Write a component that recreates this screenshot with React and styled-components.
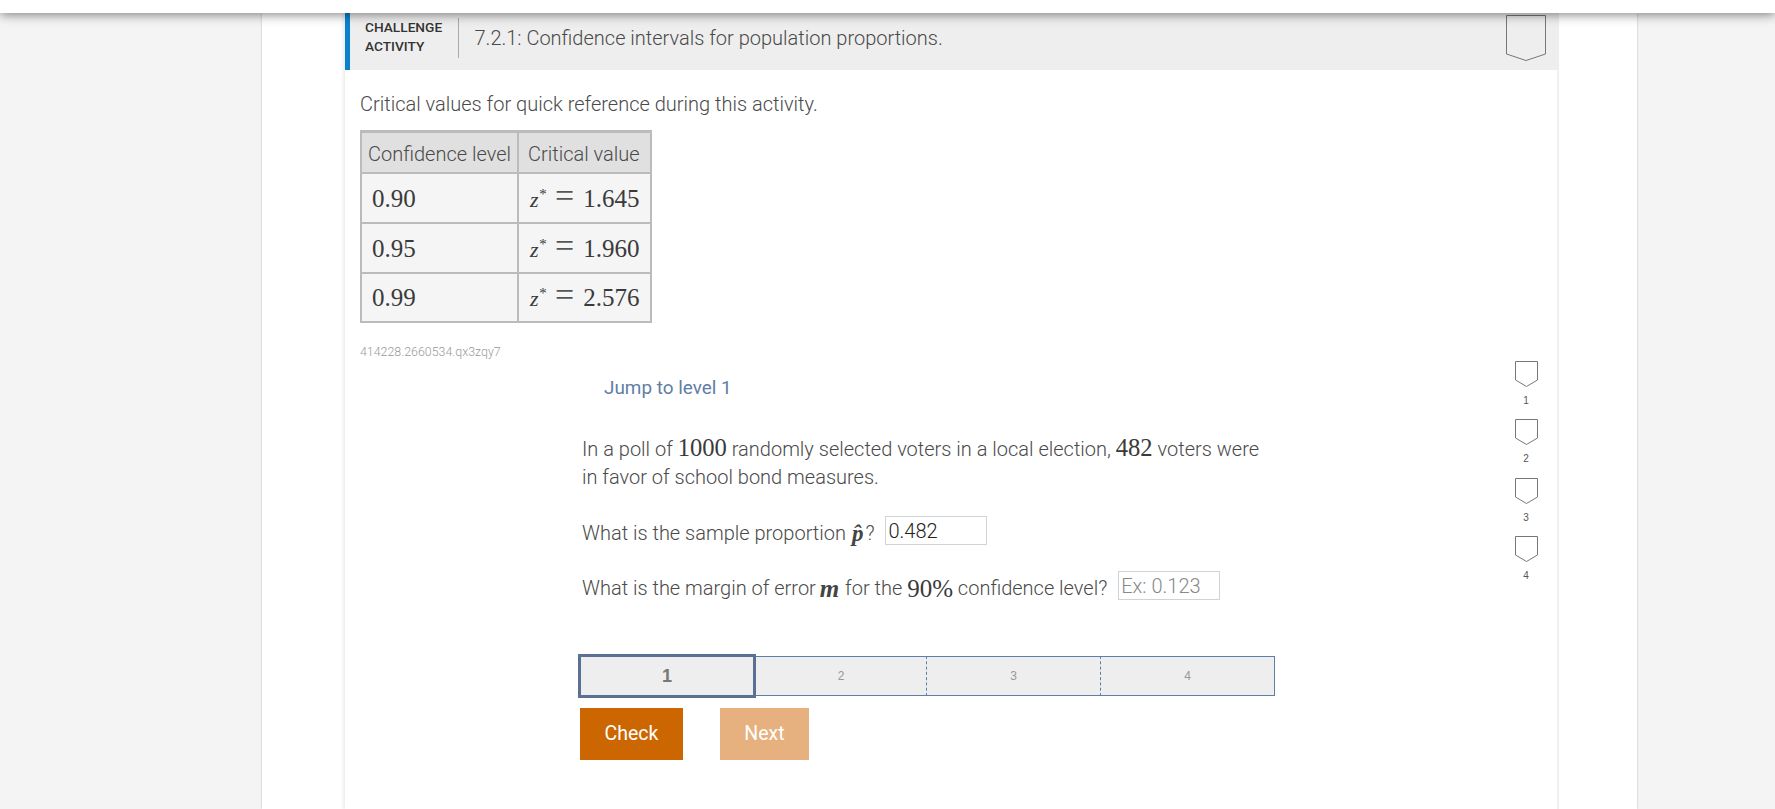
import React from 'react';
import styled, { createGlobalStyle } from 'styled-components';

const GlobalStyle = createGlobalStyle`
  html, body {
    margin: 0;
    padding: 0;
    height: 100%;
    overflow: hidden;
    background: #f4f4f4;
  }
  body {
    font-family: Roboto, "Liberation Sans", sans-serif;
    color: #444;
  }
  * { box-sizing: border-box; }
`;

const Page = styled.div`
  display: flex;
  flex-direction: column;
  height: 809px;
  overflow: hidden;
`;

const TopBar = styled.div`
  flex: none;
  height: 13px;
  background: #fff;
  box-shadow: 0 1px 12px rgba(0, 0, 0, 0.55);
  position: relative;
  z-index: 5;
`;

const Main = styled.div`
  flex: 1;
  display: flex;
  justify-content: flex-start;
  padding-left: 262px;
  min-height: 0;
`;

const Sheet = styled.div`
  width: 1375px;
  background: #fff;
  padding: 0 78px 0 83px;
  box-shadow: 0 0 2px rgba(0, 0, 0, 0.25);
`;

const Card = styled.section`
  display: flex;
  flex-direction: column;
  width: 1214px;
  height: 100%;
  background: #fff;
  box-shadow: -2px 0 3px rgba(0, 0, 0, 0.08);
`;

const Header = styled.header`
  flex: none;
  height: 57px;
  display: flex;
  align-items: flex-start;
  background: #eee;
  border-left: 5px solid #0a83cf;
  padding: 2px 13px 0 15px;
`;

const ActivityTag = styled.div`
  width: 94px;
  height: 40px;
  margin-top: 3px;
  border-right: 1px solid #aaa;
  font-size: 13.7px;
  font-weight: 500;
  line-height: 19px;
  color: #333;
  text-transform: uppercase;
`;

const Title = styled.h1`
  flex: 1;
  margin: 0;
  padding: 9px 0 0 15.5px;
  font-size: 20px;
  font-weight: 300;
  line-height: 28px;
  color: #4a4a4a;
`;

const Body = styled.div`
  flex: 1;
  padding: 20px 0 0 15px;
  border-right: 2px solid #f0f0f0;
`;

const Intro = styled.p`
  margin: 0 0 12px;
  font-size: 20px;
  font-weight: 300;
  line-height: 28px;
  color: #4a4a4a;
`;

const ValuesTable = styled.table`
  border-collapse: separate;
  border-spacing: 0;
  width: 292px;
  background: #f5f5f5;
  border: 2px solid #bbb;
  border-top-width: 3px;
`;

const HeadCell = styled.th`
  height: 41px;
  padding: 2px 0 0 ${(p) => p.$pad}px;
  width: ${(p) => p.$w}px;
  background: #e0e0e0;
  border-bottom: 2px solid #bbb;
  border-right: ${(p) => (p.$last ? 'none' : '2px solid #bbb')};
  font-size: 20px;
  font-weight: 300;
  text-align: left;
  white-space: nowrap;
  color: #4a4a4a;
`;

const ValueCell = styled.td`
  height: ${(p) => (p.$bottom ? 47 : 50)}px;
  padding: 0 0 0 ${(p) => p.$pad}px;
  border-bottom: ${(p) => (p.$bottom ? 'none' : '2px solid #bbb')};
  border-right: ${(p) => (p.$last ? 'none' : '2px solid #bbb')};
  white-space: nowrap;
  color: #333;
`;

const Math = styled.span`
  font-family: "Liberation Serif", "Times New Roman", serif;
  font-size: ${(p) => p.$size || 25}px;
  font-style: ${(p) => (p.$italic ? 'italic' : 'normal')};
  font-weight: ${(p) => p.$weight || 400};
  line-height: 1;
  color: #3a3a3a;
`;

const Variable = styled(Math)`
  margin: 0 ${(p) => p.$right}px 0 ${(p) => p.$left}px;
  color: #444;
`;

const Sup = styled.sup`
  font-size: 15px;
  line-height: 0;
`;

const Equals = styled.span`
  margin: 0 9px 0 9px;
  font-size: 34px;
  font-weight: 300;
  line-height: 0;
  color: #555;
`;

const ActivityId = styled.div`
  margin: 20px 0 0;
  font-size: 12.4px;
  font-weight: 300;
  line-height: 18px;
  color: #999;
`;

const ActivityRow = styled.div`
  display: flex;
  justify-content: space-between;
  padding-right: 11px;
`;

const Question = styled.div`
  padding: 15px 0 0 222px;
`;

const JumpLink = styled.a`
  display: block;
  margin-left: 22px;
  font-size: 18.9px;
  line-height: 24px;
  color: #5f7ea6;
`;

const Prompt = styled.p`
  width: 690px;
  margin: 35px 0 25px;
  font-size: 20px;
  font-weight: 300;
  line-height: 28px;
  color: #4a4a4a;
`;

const AnswerRow = styled.div`
  display: flex;
  align-items: center;
  height: 34px;
  margin-bottom: 21px;
  font-size: 20px;
  font-weight: 300;
  color: #4a4a4a;
  white-space: pre;
`;

const AnswerInput = styled.input`
  width: 102px;
  height: 29px;
  margin: 0 0 5px 11px;
  padding: 0 2px;
  border: 1px solid #ccd4da;
  border-radius: 0;
  outline: none;
  background: #fff;
  font-family: Roboto, sans-serif;
  font-size: 20px;
  font-weight: 300;
  color: #222;

  &::placeholder {
    color: #888;
    opacity: 1;
  }
`;

const Tracker = styled.div`
  display: flex;
  align-items: center;
  margin: 49px 0 10px -4px;
`;

const CurrentStep = styled.div`
  width: 178px;
  height: 44px;
  display: flex;
  align-items: center;
  justify-content: center;
  background: #eee;
  border: 3px solid #5a7094;
  font-family: "Liberation Sans", sans-serif;
  font-size: 18px;
  font-weight: 700;
  color: #777;
`;

const Step = styled.div`
  width: ${(p) => p.$w}px;
  height: 40px;
  display: flex;
  align-items: center;
  justify-content: center;
  background: #eee;
  border-top: 1px solid #5b7fa6;
  border-bottom: 1px solid #5b7fa6;
  border-left: ${(p) => (p.$first ? 'none' : '1px dashed #5b7fa6')};
  border-right: ${(p) => (p.$end ? '1px solid #5b7fa6' : 'none')};
  font-family: "Liberation Sans", sans-serif;
  font-size: 12px;
  color: #999;
`;

const Actions = styled.div`
  display: flex;
  gap: 37px;
  margin-left: -2px;
`;

const ActionButton = styled.button`
  width: ${(p) => p.$w}px;
  height: 52px;
  padding: 0 0 2px;
  border: none;
  background: ${(p) => (p.disabled ? '#e6b17e' : '#cc6600')};
  color: #fff;
  font-family: Roboto, sans-serif;
  font-size: 19.5px;
  font-weight: 400;
`;

const LevelRail = styled.div`
  width: 40px;
  display: flex;
  flex-direction: column;
  align-items: center;
`;

const LevelItem = styled.div`
  height: 58.33px;
  display: flex;
  flex-direction: column;
  align-items: center;
`;

const LevelLabel = styled.span`
  margin-top: 7px;
  font-family: "Liberation Sans", sans-serif;
  font-size: 10px;
  line-height: 14px;
  color: #555;
`;

const Badge = ({ width, height }) => (
  <svg width={width} height={height} viewBox={`0 0 ${width} ${height}`} style={{ display: 'block', flex: 'none' }}>
    <path
      d={`M0.5 0.5H${width - 0.5}V${height - 7}L${width / 2} ${height - 0.5}L0.5 ${height - 7}Z`}
      fill="none"
      stroke="#777"
      strokeWidth="1"
    />
  </svg>
);

const rows = [
  ['0.90', '1.645'],
  ['0.95', '1.960'],
  ['0.99', '2.576'],
];

export default function App() {
  return (
    <Page>
      <GlobalStyle />
      <TopBar />
      <Main>
        <Sheet>
          <Card>
            <Header>
              <ActivityTag>Challenge<br />Activity</ActivityTag>
              <Title>7.2.1: Confidence intervals for population proportions.</Title>
              <Badge width={40} height={46} />
            </Header>
            <Body>
              <Intro>Critical values for quick reference during this activity.</Intro>
              <ValuesTable>
                <thead>
                  <tr>
                    <HeadCell $w={157} $pad={6}>Confidence level</HeadCell>
                    <HeadCell $w={131} $pad={9} $last>Critical value</HeadCell>
                  </tr>
                </thead>
                <tbody>
                  {rows.map(([level, value], i) => (
                    <tr key={level}>
                      <ValueCell $pad={10} $bottom={i === 2}><Math>{level}</Math></ValueCell>
                      <ValueCell $pad={11} $last $bottom={i === 2}>
                        <Math $italic $size={22}>z<Sup>*</Sup></Math>
                        <Math><Equals>=</Equals>{value}</Math>
                      </ValueCell>
                    </tr>
                  ))}
                </tbody>
              </ValuesTable>
              <ActivityId>414228.2660534.qx3zqy7</ActivityId>
              <ActivityRow>
                <Question>
                  <JumpLink>Jump to level 1</JumpLink>
                  <Prompt>
                    In a poll of <Math $size={24.6}>1000</Math> randomly selected voters in a local election, <Math $size={24.6}>482</Math> voters were in favor of school bond measures.
                  </Prompt>
                  <AnswerRow>
                    What is the sample proportion <Variable $italic $weight={700} $size={23} $left={1} $right={2}>p̂</Variable>?
                    <AnswerInput defaultValue="0.482" />
                  </AnswerRow>
                  <AnswerRow>
                    What is the margin of error <Variable $italic $weight={700} $size={25} $left={-1} $right={1}>m</Variable> for the <Math>90%</Math> confidence level?
                    <AnswerInput placeholder="Ex: 0.123" />
                  </AnswerRow>
                  <Tracker>
                    <CurrentStep>1</CurrentStep>
                    <Step $w={170} $first>2</Step>
                    <Step $w={174}>3</Step>
                    <Step $w={175} $end>4</Step>
                  </Tracker>
                  <Actions>
                    <ActionButton $w={103}>Check</ActionButton>
                    <ActionButton $w={89} disabled>Next</ActionButton>
                  </Actions>
                </Question>
                <LevelRail>
                  {[1, 2, 3, 4].map((n) => (
                    <LevelItem key={n}>
                      <Badge width={23} height={26} />
                      <LevelLabel>{n}</LevelLabel>
                    </LevelItem>
                  ))}
                </LevelRail>
              </ActivityRow>
            </Body>
          </Card>
        </Sheet>
      </Main>
    </Page>
  );
}
